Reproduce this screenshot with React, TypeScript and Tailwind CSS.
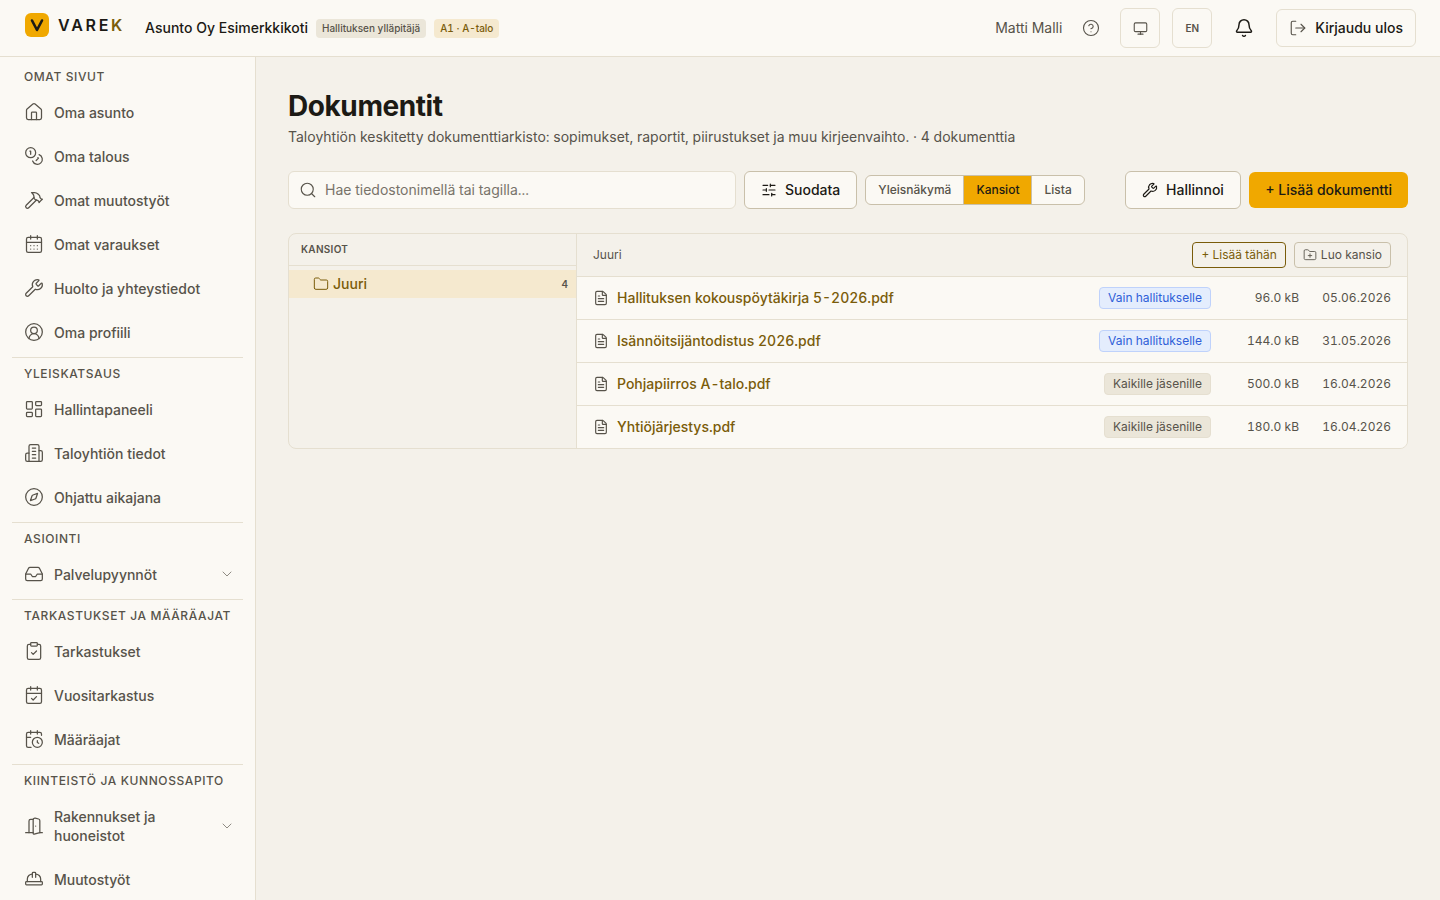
import React from 'react';
import {
  House, Coins, Hammer, CalendarDays, Wrench, CircleUserRound, LayoutDashboard, Compass,
  Inbox, ChevronDown, ClipboardCheck, CalendarCheck, CalendarClock, DoorOpen, HardHat, CircleHelp,
  Monitor, Bell, LogOut, Search, SlidersHorizontal, Folder, FolderPlus, FileText,
} from 'lucide-react';

// older lucide Building2, the one in the reference has no door
function Building({ className, strokeWidth }: { className?: string; strokeWidth?: number }) {
  return (
    <svg viewBox="0 0 24 24" className={className} fill="none" stroke="currentColor" strokeWidth={strokeWidth} strokeLinecap="round" strokeLinejoin="round">
      <path d="M6 22V4a2 2 0 0 1 2-2h8a2 2 0 0 1 2 2v18Z" />
      <path d="M6 12H4a2 2 0 0 0-2 2v6a2 2 0 0 0 2 2h2" />
      <path d="M18 9h2a2 2 0 0 1 2 2v9a2 2 0 0 1-2 2h-2" />
      <path d="M10 6h4" />
      <path d="M10 10h4" />
      <path d="M10 14h4" />
      <path d="M10 18h4" />
    </svg>
  );
}

const sections = [
  {
    title: 'Omat sivut',
    items: [
      { name: 'Oma asunto', icon: House },
      { name: 'Oma talous', icon: Coins },
      { name: 'Omat muutostyöt', icon: Hammer },
      { name: 'Omat varaukset', icon: CalendarDays },
      { name: 'Huolto ja yhteystiedot', icon: Wrench },
      { name: 'Oma profiili', icon: CircleUserRound },
    ],
  },
  {
    title: 'Yleiskatsaus',
    items: [
      { name: 'Hallintapaneeli', icon: LayoutDashboard },
      { name: 'Taloyhtiön tiedot', icon: Building },
      { name: 'Ohjattu aikajana', icon: Compass },
    ],
  },
  {
    title: 'Asiointi',
    items: [{ name: 'Palvelupyynnöt', icon: Inbox, sub: true }],
  },
  {
    title: 'Tarkastukset ja määräajat',
    items: [
      { name: 'Tarkastukset', icon: ClipboardCheck },
      { name: 'Vuositarkastus', icon: CalendarCheck },
      { name: 'Määräajat', icon: CalendarClock },
    ],
  },
  {
    title: 'Kiinteistö ja kunnossapito',
    items: [
      { name: 'Rakennukset ja huoneistot', icon: DoorOpen, sub: true },
      { name: 'Muutostyöt', icon: HardHat },
    ],
  },
];

const docs = [
  { name: 'Hallituksen kokouspöytäkirja 5-2026.pdf', board: true, size: '96.0 kB', date: '05.06.2026' },
  { name: 'Isännöitsijäntodistus 2026.pdf', board: true, size: '144.0 kB', date: '31.05.2026' },
  { name: 'Pohjapiirros A-talo.pdf', board: false, size: '500.0 kB', date: '16.04.2026' },
  { name: 'Yhtiöjärjestys.pdf', board: false, size: '180.0 kB', date: '16.04.2026' },
];

function Sidebar() {
  return (
    <aside className="w-[256px] shrink-0 overflow-hidden border-r border-[#e5dfd0] bg-[#fbf9f4] px-3">
      {sections.map((section, i) => (
        <div key={section.title} className={i > 0 ? 'border-t border-[#e5dfd0] pt-[8px] pb-[3px]' : 'pt-[12px] pb-[3px]'}>
          <div className="px-3 pb-[5px] text-[12px] leading-[16px] font-medium whitespace-nowrap uppercase tracking-[0.05em] text-[#57534a]">
            {section.title}
          </div>
          {section.items.map((item) => (
            <div key={item.name} className="flex items-center gap-[10px] py-[12.5px] pr-2 pl-3 text-[14px] leading-[19px] font-medium text-[#57534a]">
              <item.icon className="-my-px h-[20px] w-[20px] shrink-0 text-[#57534a]" strokeWidth={1.5} />
              <span className="flex-1">{item.name}</span>
              {item.sub && <ChevronDown className="h-[16px] w-[16px] shrink-0 text-[#57534a]" strokeWidth={1} />}
            </div>
          ))}
        </div>
      ))}
    </aside>
  );
}

function Header() {
  return (
    <header className="flex h-[57px] shrink-0 items-center justify-between border-b border-[#e5dfd0] bg-[#fbf9f4] pr-6 pl-[25px]">
      <div className="flex items-center">
        <div className="mb-[6px] flex items-center">
          <div className="flex h-[24px] w-[24px] items-center justify-center rounded-[6px] bg-[#f0a800]">
            <svg viewBox="0 0 24 24" className="h-[24px] w-[24px]" fill="none">
              <path d="M7 7.5 12 17 17 7.5" stroke="#1c1a15" strokeWidth="2.6" strokeLinecap="round" strokeLinejoin="round" />
            </svg>
          </div>
          <div className="ml-[9px] text-[16px] leading-none font-semibold tracking-[0.17em] text-[#1c1a15]">
            VARE<span className="text-[#7a5c0a]">K</span>
          </div>
        </div>
        <div className="ml-[20px] text-sm font-medium text-[#1c1a15]">Asunto Oy Esimerkkikoti</div>
        <span className="ml-2 rounded-[4px] bg-[#ebe6d9] px-[6px] py-[2px] text-[10px] leading-[15px] font-medium text-[#57534a]">
          Hallituksen ylläpitäjä
        </span>
        <span className="ml-2 rounded-[4px] bg-[#f5e9cf] px-[6px] py-[2px] text-[10px] leading-[15px] font-medium text-[#7a5c0a]">
          A1 · A-talo
        </span>
      </div>
      <div className="flex items-center">
        <span className="text-sm text-[#57534a]">Matti Malli</span>
        <CircleHelp className="ml-[20px] h-[18px] w-[18px] text-[#57534a]" strokeWidth={1.5} />
        <button className="ml-5 flex h-[40px] w-[40px] items-center justify-center rounded-[6px] border border-[#e5dfd0]">
          <Monitor className="h-[15px] w-[15px] text-[#57534a]" strokeWidth={1.75} />
        </button>
        <button className="ml-3 flex h-[40px] w-[40px] items-center justify-center rounded-[6px] border border-[#e5dfd0] text-[10px] font-semibold text-[#57534a]">
          EN
        </button>
        <Bell className="ml-[22px] h-[20px] w-[20px] text-[#1c1a15]" strokeWidth={1.75} />
        <button className="ml-[22px] flex h-[38px] items-center gap-2 rounded-[6px] border border-[#e5dfd0] px-3 text-sm font-medium text-[#1c1a15]">
          <LogOut className="h-[18px] w-[18px] text-[#57534a]" strokeWidth={1.5} />
          Kirjaudu ulos
        </button>
      </div>
    </header>
  );
}

function Toolbar() {
  return (
    <div className="mt-[24px] flex items-center">
      <div className="flex h-[38px] w-[448px] items-center gap-2 rounded-[6px] border border-[#e5dfd0] bg-[#fbf9f4] px-[10px]">
        <Search className="h-[18px] w-[18px] text-[#57534a]" strokeWidth={1.5} />
        <span className="text-sm text-[#78736a]">Hae tiedostonimellä tai tagilla...</span>
      </div>
      <button className="ml-2 flex h-[38px] items-center gap-2 rounded-[6px] border border-[#c9c0aa] bg-[#fbf9f4] px-4 text-sm font-medium text-[#1c1a15]">
        <SlidersHorizontal className="h-[16px] w-[16px]" strokeWidth={1.75} />
        Suodata
      </button>
      <div className="ml-2 flex h-[30px] overflow-hidden rounded-[6px] border border-[#c9c0aa] bg-[#fbf9f4] text-[12px] leading-[28px] font-medium text-[#57534a]">
        <span className="border-r border-[#c9c0aa] px-3">Yleisnäkymä</span>
        <span className="border-r border-[#c9c0aa] bg-[#f0a800] px-3 text-[#1c1a15]">Kansiot</span>
        <span className="px-3">Lista</span>
      </div>
      <button className="ml-auto flex h-[38px] items-center gap-2 rounded-[6px] border border-[#c9c0aa] bg-[#fbf9f4] px-[16.5px] text-sm font-medium text-[#1c1a15]">
        <Wrench className="h-[16px] w-[16px]" strokeWidth={1.75} />
        Hallinnoi
      </button>
      <button className="ml-2 flex h-[36px] items-center rounded-[6px] bg-[#f0a800] px-4 text-sm font-medium text-[#1c1a15]">
        + Lisää dokumentti
      </button>
    </div>
  );
}

function Browser() {
  return (
    <div className="mt-[24px] flex overflow-hidden rounded-[8px] border border-[#e5dfd0] bg-[#f4f1ea]">
      <div className="w-[288px] shrink-0 border-r border-[#e5dfd0]">
        <div className="border-b border-[#e5dfd0] px-3 py-[8px] text-[10px] leading-[15px] font-semibold uppercase tracking-[0.03em] text-[#57534a]">
          Kansiot
        </div>
        <div className="mt-1 flex h-[28px] items-center bg-[#f5e9cf] pr-2 pl-6 text-sm font-medium text-[#7a5c0a]">
          <Folder className="mr-1 h-[16px] w-[16px]" strokeWidth={1.5} />
          <span className="flex-1">Juuri</span>
          <span className="text-[10px] font-semibold text-[#57534a]">4</span>
        </div>
      </div>
      <div className="min-w-0 flex-1">
        <div className="flex h-[43px] items-center justify-between border-b border-[#e5dfd0] px-4">
          <span className="text-[12px] text-[#57534a]">Juuri</span>
          <div className="flex items-center gap-2">
            <button className="flex h-[26px] items-center rounded-[4px] border border-[#7a5c0a] px-2 text-[12px] text-[#7a5c0a]">
              + Lisää tähän
            </button>
            <button className="flex h-[26px] items-center gap-1 rounded-[4px] border border-[#c9c0aa] px-2 text-[12px] text-[#57534a]">
              <FolderPlus className="h-[14px] w-[14px]" strokeWidth={1.5} />
              Luo kansio
            </button>
          </div>
        </div>
        {docs.map((doc, i) => (
          <div key={doc.name} className={`flex items-center bg-[#fbf9f4] px-4 ${i < docs.length - 1 ? 'h-[43px] border-b border-[#e5dfd0]' : 'h-[42px]'}`}>
            <FileText className="h-[16px] w-[16px] shrink-0 text-[#57534a]" strokeWidth={1.75} />
            <span className="ml-2 flex-1 text-sm font-medium text-[#7a5c0a]">{doc.name}</span>
            {doc.board ? (
              <span className="rounded-[4px] border border-[#bfd2fb] bg-[#e4edfd] px-2 py-[2px] text-[12px] leading-[16px] text-[#2f5fd8]">
                Vain hallitukselle
              </span>
            ) : (
              <span className="rounded-[4px] border border-[#e5dfd0] bg-[#ebe6d9] px-2 py-[2px] text-[12px] leading-[16px] text-[#57534a]">
                Kaikille jäsenille
              </span>
            )}
            <span className="w-[88px] text-right text-[12px] text-[#57534a]">{doc.size}</span>
            <span className="w-[92px] text-right text-[12px] text-[#57534a]">{doc.date}</span>
          </div>
        ))}
      </div>
    </div>
  );
}

export default function App() {
  return (
    <div className="flex h-screen flex-col overflow-hidden bg-[#f4f1ea] font-['Inter',sans-serif] tabular-nums">
      <Header />
      <div className="flex min-h-0 flex-1">
        <Sidebar />
        <main className="min-w-0 flex-1 px-8 pt-[32px]">
          <h1 className="text-[28px] leading-[34px] font-bold tracking-[-0.015em] text-[#1c1a15]">Dokumentit</h1>
          <p className="mt-[4px] text-sm text-[#57534a]">
            Taloyhtiön keskitetty dokumenttiarkisto: sopimukset, raportit, piirustukset ja muu kirjeenvaihto. · 4 dokumenttia
          </p>
          <Toolbar />
          <Browser />
        </main>
      </div>
    </div>
  );
}
